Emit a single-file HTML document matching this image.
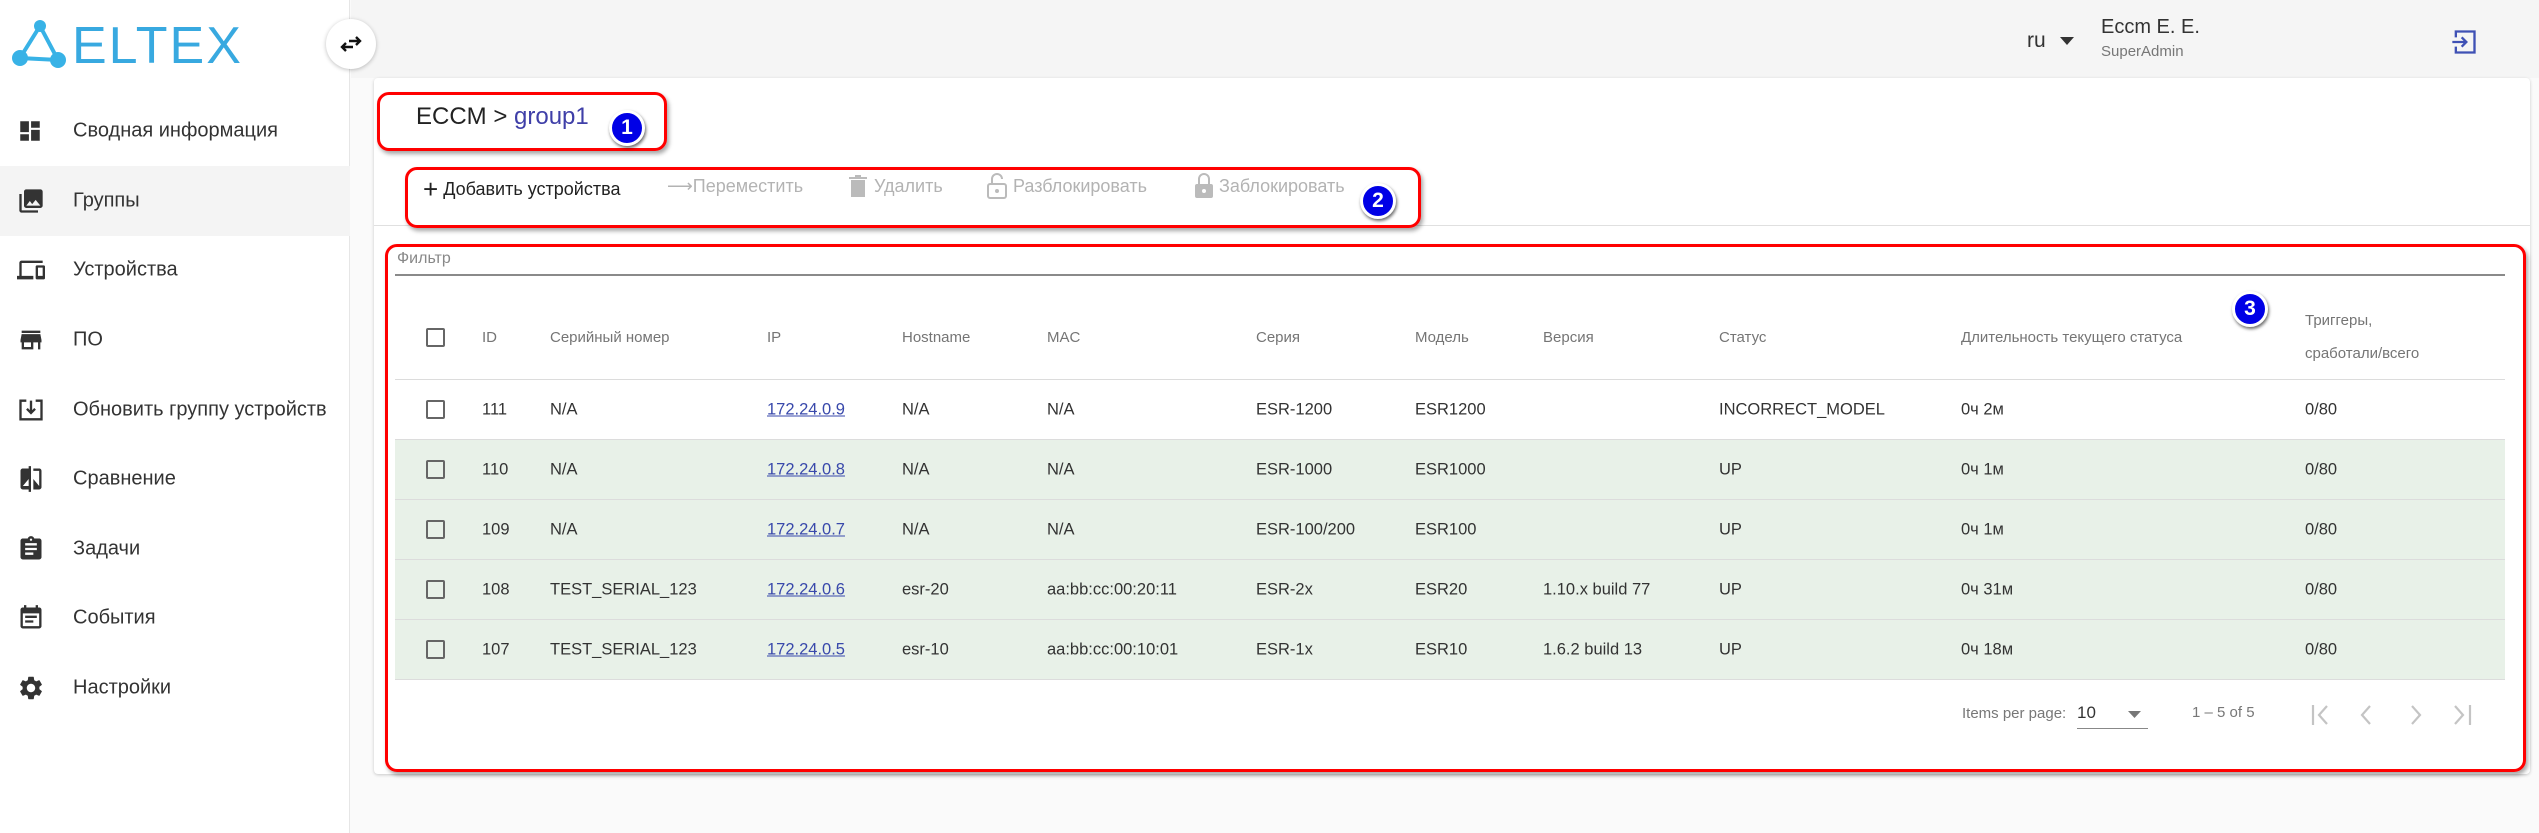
<!DOCTYPE html>
<html><head><meta charset="utf-8"><style>
*{margin:0;padding:0;box-sizing:border-box}
body{width:2539px;height:833px;overflow:hidden;background:#fafafa;font-family:"Liberation Sans","Noto Sans CJK JP",sans-serif;position:relative;color:#333}
.a{position:absolute;white-space:nowrap}
#side{position:absolute;left:0;top:0;width:350px;height:833px;background:#fff;border-right:1px solid #e6e6e6}
.mi{position:absolute;left:0;width:350px;height:70px;font-size:20px;color:#333}
.mi span{position:absolute;left:73px;top:50%;transform:translateY(-50%)}
.mi svg{position:absolute;left:17px;top:50%;transform:translateY(-50%)}
#hdr{position:absolute;left:351px;top:0;right:0;height:78px;background:#f5f5f5}
#card{position:absolute;left:374px;top:78px;width:2156px;height:696px;background:#fff;box-shadow:0 1px 3px rgba(0,0,0,.2);border-radius:4px}
.red{position:absolute;border:3px solid #f00;border-radius:12px;box-shadow:2px 3px 4px rgba(0,0,0,.35)}
.badge{position:absolute;width:36px;height:36px;border-radius:50%;background:#0000e6;border:3px solid #fff;box-shadow:1px 2px 3px rgba(0,0,0,.6);color:#fff;font-weight:bold;font-size:21px;text-align:center;line-height:30px}
.tb{position:absolute;top:176px;font-size:18px;color:#b3b3b3}
.th{position:absolute;font-size:15px;color:#757575}
.row{position:absolute;left:395px;width:2110px;height:60px;border-bottom:1px solid #dcdcdc}
.row .c{position:absolute;top:50%;transform:translateY(-50%);font-size:16.5px;color:#333;white-space:nowrap}
.cb{position:absolute;width:19px;height:19px;border:2px solid #666;border-radius:2px}
a{color:#3949ab;text-decoration:underline}
</style></head><body>
<div id="side">
  <svg class="a" style="left:10px;top:18px" width="230" height="52" viewBox="0 0 230 52">
    <g fill="#38b2e6"><circle cx="10" cy="40" r="8"/><circle cx="48" cy="42" r="8"/><circle cx="30" cy="8" r="6"/>
    <path d="M10 40 L30 8 L48 42Z" fill="none" stroke="#38b2e6" stroke-width="4"/></g>
    <text x="62" y="45" font-family="Liberation Sans,sans-serif" font-size="52" fill="#38a9e0" letter-spacing="2">ELTEX</text>
  </svg>
  <div class="mi" style="top:96px"><svg width="26" height="26" viewBox="0 0 24 24"><path fill="#333" d="M3 13h8V3H3v10zm0 8h8v-6H3v6zm10 0h8V11h-8v10zm0-18v6h8V3h-8z"/></svg><span>Сводная информация</span></div>
  <div class="mi" style="top:166px;background:#f4f4f4"><svg width="28" height="28" viewBox="0 0 24 24"><path fill="#333" d="M22 16V4c0-1.1-.9-2-2-2H8c-1.1 0-2 .9-2 2v12c0 1.1.9 2 2 2h12c1.1 0 2-.9 2-2zm-11-4l2 2.7 3-3.7 4 5H8l3-4zM2 6v14c0 1.1.9 2 2 2h14v-2H4V6H2z"/></svg><span>Группы</span></div>
  <div class="mi" style="top:235px"><svg width="28" height="28" viewBox="0 0 24 24"><path fill="#333" d="M4 6h18V4H4c-1.1 0-2 .9-2 2v11H0v3h14v-3H4V6zm19 2h-6c-.55 0-1 .45-1 1v10c0 .55.45 1 1 1h6c.55 0 1-.45 1-1V9c0-.55-.45-1-1-1zm-1 9h-4v-7h4v7z"/></svg><span>Устройства</span></div>
  <div class="mi" style="top:305px"><svg width="28" height="28" viewBox="0 0 24 24"><path fill="#333" d="M20 4H4v2h16V4zm1 10v-2l-1-5H4l-1 5v2h1v6h10v-6h4v6h2v-6h1zm-9 4H6v-4h6v4z"/></svg><span>ПО</span></div>
  <div class="mi" style="top:375px"><svg width="28" height="28" viewBox="0 0 24 24"><path fill="none" stroke="#333" stroke-width="2" d="M8 4H3v16h18V4h-5M12 4v10M8.5 11l3.5 3.5 3.5-3.5"/></svg><span>Обновить группу устройств</span></div>
  <div class="mi" style="top:444px"><svg width="28" height="28" viewBox="0 0 24 24"><path fill="#333" d="M10 3H5c-1.1 0-2 .9-2 2v14c0 1.1.9 2 2 2h5v2h2V1h-2v2zm0 15H5l5-6v6zm9-15h-5v2h5v13l-5-6v9h5c1.1 0 2-.9 2-2V5c0-1.1-.9-2-2-2z"/></svg><span>Сравнение</span></div>
  <div class="mi" style="top:514px"><svg width="28" height="28" viewBox="0 0 24 24"><path fill="#333" d="M19 3h-4.18C14.4 1.840 13.3 1 12 1s-2.4.84-2.82 2H5c-1.1 0-2 .9-2 2v14c0 1.1.9 2 2 2h14c1.1 0 2-.9 2-2V5c0-1.1-.9-2-2-2zm-7 0c.55 0 1 .45 1 1s-.45 1-1 1-1-.45-1-1 .45-1 1-1zm2 14H7v-2h7v2zm3-4H7v-2h10v2zm0-4H7V7h10v2z"/></svg><span>Задачи</span></div>
  <div class="mi" style="top:583px"><svg width="28" height="28" viewBox="0 0 24 24"><path fill="#333" d="M17 10H7v2h10v-2zm2-7h-1V1h-2v2H8V1H6v2H5c-1.11 0-2 .9-2 2v14c0 1.1.89 2 2 2h14c1.1 0 2-.9 2-2V5c0-1.1-.9-2-2-2zm0 16H5V8h14v11zm-5-5H7v2h7v-2z"/></svg><span>События</span></div>
  <div class="mi" style="top:653px"><svg width="28" height="28" viewBox="0 0 24 24"><path fill="#333" d="M19.14 12.94c.04-.3.06-.61.06-.94 0-.32-.02-.64-.07-.94l2.03-1.58a.49.49 0 00.12-.61l-1.920-3.32a.488.488 0 00-.59-.22l-2.39.96c-.5-.38-1.030-.7-1.620-.94l-.36-2.54a.484.484 0 00-.48-.41h-3.84c-.24 0-.43.17-.47.41l-.36 2.54c-.59.24-1.13.57-1.62.94l-2.39-.96c-.22-.08-.47 0-.59.22L2.74 8.87c-.12.21-.08.47.12.61l2.03 1.58c-.05.3-.09.63-.09.94s.02.64.07.94l-2.03 1.58a.49.49 0 00-.12.61l1.92 3.32c.12.22.37.29.59.22l2.39-.96c.5.38 1.03.7 1.62.94l.36 2.54c.05.24.24.41.48.41h3.84c.24 0 .44-.17.47-.41l.36-2.54c.59-.24 1.13-.56 1.62-.94l2.39.96c.22.08.47 0 .59-.22l1.92-3.32c.12-.22.07-.47-.12-.61l-2.01-1.58zM12 15.6c-1.98 0-3.6-1.62-3.6-3.6s1.62-3.6 3.6-3.6 3.6 1.62 3.6 3.6-1.62 3.6-3.6 3.6z"/></svg><span>Настройки</span></div>
</div>
<div id="hdr"></div>
<div class="a" style="left:326px;top:19px;width:50px;height:50px;border-radius:50%;background:#fff;box-shadow:0 1px 4px rgba(0,0,0,.25)"><svg style="position:absolute;left:13px;top:13px" width="24" height="24" viewBox="0 0 24 24"><path fill="none" stroke="#111" stroke-width="2.4" d="M10 9h11M17 5l4 4-4 4M14 15H3M7 11l-4 4 4 4"/></svg></div>
<div class="a" style="left:2027px;top:29px;font-size:21px;color:#333">ru</div>
<svg class="a" style="left:2060px;top:37px" width="14" height="8"><path d="M0 0h14L7 8z" fill="#333"/></svg>
<div class="a" style="left:2101px;top:16px;font-size:20px;color:#333">Eccm E. E.</div>
<div class="a" style="left:2101px;top:43px;font-size:15px;color:#777">SuperAdmin</div>
<svg class="a" style="left:2450px;top:28px" width="28" height="28" viewBox="0 0 24 24"><path fill="none" stroke="#3f51b5" stroke-width="2" d="M5 8V3h16v18H5v-5M2 12h12M10 8l4 4-4 4"/></svg>

<div id="card"></div>
<div class="a" style="left:374px;top:225px;width:2156px;height:1px;background:#e0e0e0"></div>
<div class="a" style="left:416px;top:103px;font-size:24px;color:#222">ECCM &gt; <span style="color:#3f3fa8">group1</span></div>
<div class="a" style="left:423px;top:174px;font-size:18px;color:#222"><span style="font-size:26px;vertical-align:-3px">+</span> Добавить устройства</div>
<div class="tb" style="left:667px">⟶Переместить</div>
<svg class="a" style="left:848px;top:175px" width="20" height="22" viewBox="0 0 20 22"><path d="M3 5h14v17H3zM1 2h18v2H1zM7 0h6v2H7z" fill="#bbb"/></svg>
<div class="tb" style="left:874px">Удалить</div>
<svg class="a" style="left:987px;top:173px" width="20" height="26" viewBox="0 0 20 26"><path d="M5 11V6a5 5 0 0 1 10 0" fill="none" stroke="#bbb" stroke-width="2"/><rect x="1" y="11" width="18" height="14" rx="2" fill="none" stroke="#bbb" stroke-width="2"/><circle cx="10" cy="18" r="2" fill="#bbb"/></svg>
<div class="tb" style="left:1013px">Разблокировать</div>
<svg class="a" style="left:1194px;top:173px" width="20" height="26" viewBox="0 0 20 26"><path d="M5 11V6a5 5 0 0 1 10 0v5" fill="none" stroke="#bbb" stroke-width="2"/><rect x="1" y="11" width="18" height="14" rx="2" fill="#bbb"/><circle cx="10" cy="18" r="2" fill="#fff"/></svg>
<div class="tb" style="left:1219px">Заблокировать</div>

<div class="a" style="left:397px;top:250px;font-size:16px;color:#888">Фильтр</div>
<div class="a" style="left:395px;top:274px;width:2110px;height:2px;background:#8a8a8a"></div>

<div class="cb" style="left:426px;top:328px"></div>
<div class="th" style="left:482px;top:329px">ID</div>
<div class="th" style="left:550px;top:329px">Серийный номер</div>
<div class="th" style="left:767px;top:329px">IP</div>
<div class="th" style="left:902px;top:329px">Hostname</div>
<div class="th" style="left:1047px;top:329px">MAC</div>
<div class="th" style="left:1256px;top:329px">Серия</div>
<div class="th" style="left:1415px;top:329px">Модель</div>
<div class="th" style="left:1543px;top:329px">Версия</div>
<div class="th" style="left:1719px;top:329px">Статус</div>
<div class="th" style="left:1961px;top:329px">Длительность текущего статуса</div>
<div class="th" style="left:2305px;top:312px">Триггеры,</div>
<div class="th" style="left:2305px;top:345px">сработали/всего</div>
<div class="a" style="left:395px;top:379px;width:2110px;height:1px;background:#dcdcdc"></div>

<div class="row" style="top:380px;background:#fff"><div class="cb" style="left:31px;top:20px"></div><div class="c" style="left:87px">111</div><div class="c" style="left:155px">N/A</div><div class="c" style="left:372px"><a>172.24.0.9</a></div><div class="c" style="left:507px">N/A</div><div class="c" style="left:652px">N/A</div><div class="c" style="left:861px">ESR-1200</div><div class="c" style="left:1020px">ESR1200</div><div class="c" style="left:1324px">INCORRECT_MODEL</div><div class="c" style="left:1566px">0ч 2м</div><div class="c" style="left:1910px">0/80</div></div>
<div class="row" style="top:440px;background:#e8f1e8"><div class="cb" style="left:31px;top:20px"></div><div class="c" style="left:87px">110</div><div class="c" style="left:155px">N/A</div><div class="c" style="left:372px"><a>172.24.0.8</a></div><div class="c" style="left:507px">N/A</div><div class="c" style="left:652px">N/A</div><div class="c" style="left:861px">ESR-1000</div><div class="c" style="left:1020px">ESR1000</div><div class="c" style="left:1324px">UP</div><div class="c" style="left:1566px">0ч 1м</div><div class="c" style="left:1910px">0/80</div></div>
<div class="row" style="top:500px;background:#e8f1e8"><div class="cb" style="left:31px;top:20px"></div><div class="c" style="left:87px">109</div><div class="c" style="left:155px">N/A</div><div class="c" style="left:372px"><a>172.24.0.7</a></div><div class="c" style="left:507px">N/A</div><div class="c" style="left:652px">N/A</div><div class="c" style="left:861px">ESR-100/200</div><div class="c" style="left:1020px">ESR100</div><div class="c" style="left:1324px">UP</div><div class="c" style="left:1566px">0ч 1м</div><div class="c" style="left:1910px">0/80</div></div>
<div class="row" style="top:560px;background:#e8f1e8"><div class="cb" style="left:31px;top:20px"></div><div class="c" style="left:87px">108</div><div class="c" style="left:155px">TEST_SERIAL_123</div><div class="c" style="left:372px"><a>172.24.0.6</a></div><div class="c" style="left:507px">esr-20</div><div class="c" style="left:652px">aa:bb:cc:00:20:11</div><div class="c" style="left:861px">ESR-2x</div><div class="c" style="left:1020px">ESR20</div><div class="c" style="left:1148px">1.10.x build 77</div><div class="c" style="left:1324px">UP</div><div class="c" style="left:1566px">0ч 31м</div><div class="c" style="left:1910px">0/80</div></div>
<div class="row" style="top:620px;background:#e8f1e8"><div class="cb" style="left:31px;top:20px"></div><div class="c" style="left:87px">107</div><div class="c" style="left:155px">TEST_SERIAL_123</div><div class="c" style="left:372px"><a>172.24.0.5</a></div><div class="c" style="left:507px">esr-10</div><div class="c" style="left:652px">aa:bb:cc:00:10:01</div><div class="c" style="left:861px">ESR-1x</div><div class="c" style="left:1020px">ESR10</div><div class="c" style="left:1148px">1.6.2 build 13</div><div class="c" style="left:1324px">UP</div><div class="c" style="left:1566px">0ч 18м</div><div class="c" style="left:1910px">0/80</div></div>

<div class="a" style="left:1962px;top:705px;font-size:15px;color:#777">Items per page:</div>
<div class="a" style="left:2077px;top:703px;font-size:17px;color:#333">10</div>
<svg class="a" style="left:2128px;top:711px" width="13" height="7"><path d="M0 0h13L6.5 7z" fill="#777"/></svg>
<div class="a" style="left:2077px;top:728px;width:71px;height:1px;background:#888"></div>
<div class="a" style="left:2192px;top:704px;font-size:15px;color:#777">1 – 5 of 5</div>
<svg class="a" style="left:2310px;top:704px" width="180" height="22" viewBox="0 0 180 22"><g fill="none" stroke="#c4c4c4" stroke-width="2.2"><path d="M3 1v20M17 2l-8 9 8 9M60 2l-8 9 8 9M102 2l8 9-8 9M145 2l8 9-8 9M160 1v20"/></g></svg>

<div class="red" style="left:377px;top:92px;width:290px;height:59px"></div>
<div class="badge" style="left:609px;top:110px">1</div>
<div class="red" style="left:405px;top:167px;width:1016px;height:61px"></div>
<div class="badge" style="left:1360px;top:183px">2</div>
<div class="red" style="left:385px;top:244px;width:2141px;height:528px"></div>
<div class="badge" style="left:2232px;top:291px">3</div>
</body></html>
